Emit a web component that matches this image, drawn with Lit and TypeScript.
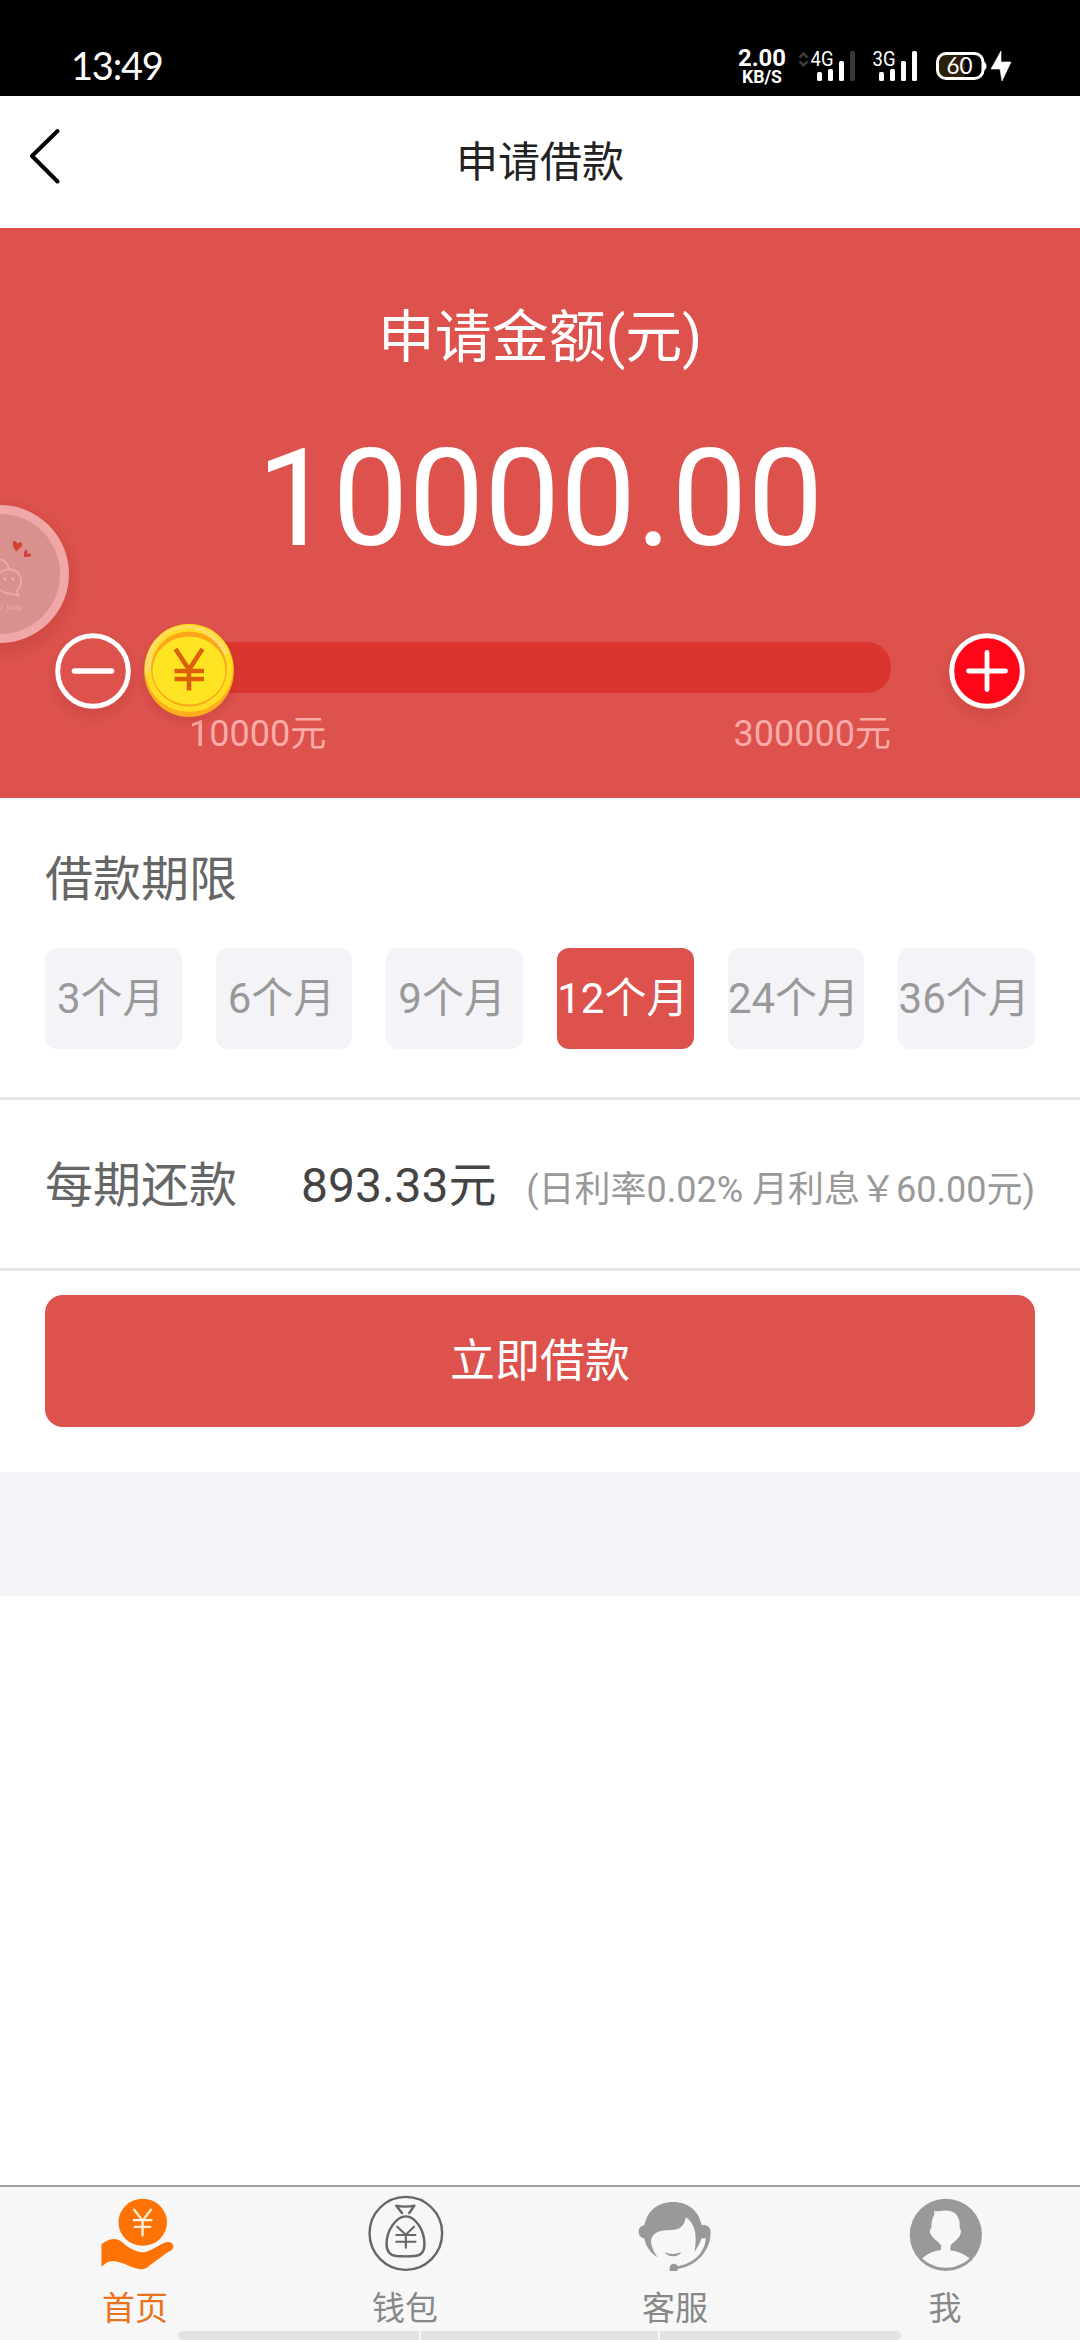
import { LitElement, html, css, svg } from "lit";
import { customElement, property, state } from "lit/decorators.js";
import { classMap } from "lit/directives/class-map.js";

@customElement("status-bar")
class StatusBar extends LitElement {
  static styles = css`
    :host {
      display: flex;
      justify-content: space-between;
      height: 96px;
      background: #000;
      color: #fff;
      box-sizing: border-box;
      padding: 36px 66px 0 71px;
    }
    .time {
      padding-top: 9px;
      font: 400 38px/40px Lato, Roboto, sans-serif;
      letter-spacing: -1.2px;
    }
    .icons {
      display: block;
      width: 280px;
      height: 60px;
    }
    .bold {
      font: 700 24px Roboto, sans-serif;
      fill: #fff;
    }
    .unit {
      font: 700 18px Roboto, sans-serif;
      fill: #fff;
    }
    .net {
      font: 400 20.5px Roboto, sans-serif;
      fill: #fff;
    }
    .level {
      font: 400 23px Lato, Roboto, sans-serif;
      fill: #fff;
    }
  `;

  render() {
    return html`
      <div class="time">13:49</div>
      <svg class="icons" viewBox="734 36 280 60">
        <text class="bold" x="738" y="66" textLength="48" lengthAdjust="spacingAndGlyphs">2.00</text>
        <text class="unit" x="742" y="83" textLength="40" lengthAdjust="spacingAndGlyphs">KB/S</text>
        <path d="M799.5 57.5l4-4 4 4M799.5 61.5l4 4 4-4" fill="none" stroke="#3a3a3a" stroke-width="2.6" />
        <text class="net" x="810.5" y="66" textLength="23" lengthAdjust="spacingAndGlyphs">4G</text>
        <g fill="#fff">
          <rect x="817" y="72" width="5" height="9" rx="1.5" />
          <rect x="828" y="69" width="5" height="12" rx="1.5" />
          <rect x="839" y="61" width="5" height="20" rx="1.5" />
          <rect x="850" y="51" width="5" height="30" rx="1.5" fill="#383838" />
          <rect x="879" y="72" width="5" height="9" rx="1.5" />
          <rect x="890" y="69" width="5" height="12" rx="1.5" />
          <rect x="901" y="61" width="5" height="20" rx="1.5" />
          <rect x="912" y="51" width="5" height="30" rx="1.5" />
        </g>
        <text class="net" x="872.5" y="66" textLength="23" lengthAdjust="spacingAndGlyphs">3G</text>
        <path d="M965 54h-19a8 8 0 0 0-8 8v8a8 8 0 0 0 8 8h19z" fill="#2b200b" />
        <rect x="937.5" y="53.5" width="45.5" height="25" rx="8.5" fill="none" stroke="#fff" stroke-width="3" />
        <path d="M983 61q3.5 1.500 3.500 5t-3.500 5z" fill="#fff" />
        <text class="level" x="946.500" y="74" textLength="26" lengthAdjust="spacingAndGlyphs">60</text>
        <path d="M1001 51l-10 18h9l2 12 9-19h-10z" fill="#fff" stroke="#fff" stroke-width="0.6" stroke-linejoin="round" />
      </svg>
    `;
  }
}

@customElement("amount-panel")
class AmountPanel extends LitElement {
  @property() amount = "10000.00";

  static styles = css`
    :host {
      display: flex;
      flex-direction: column;
      position: relative;
      height: 570px;
      background: #dd524d;
      color: #fff;
      box-sizing: border-box;
      padding-top: 71.500px;
    }
    .caption {
      height: 76px;
      font-size: 57px;
      line-height: 76px;
      text-align: center;
    }
    .amount {
      height: 160px;
      margin-top: 43.500px;
      font-size: 135px;
      line-height: 160px;
      text-align: center;
    }
    .slider {
      display: grid;
      grid-template-columns: 132px 702px 132px;
      grid-template-rows: 93px;
      padding-left: 57px;
      height: 93px;
      margin-top: 45px;
      align-items: center;
    }
    .round {
      display: block;
      width: 96px;
      height: 96px;
      overflow: visible;
    }
    .minus {
      margin-left: -12px;
    }
    .plus {
      margin-left: 48px;
    }
    .track {
      position: relative;
      height: 51px;
      margin-top: -6px;
      border-radius: 24px;
      background: #da362f;
    }
    .coin {
      position: absolute;
      left: -57px;
      top: -30px;
      width: 114px;
      height: 120px;
    }
    .limits {
      display: flex;
      justify-content: space-between;
      padding: 0 189px;
      margin-top: -7px;
      font-size: 36px;
      line-height: 48px;
      height: 48px;
      color: #fbaba8;
    }
    .bubble {
      position: absolute;
      left: 0;
      top: 257px;
      width: 100px;
      height: 180px;
    }
    .note {
      font: italic 400 11px "Liberation Serif", serif;
      fill: #ecadaa;
    }
  `;

  render() {
    return html`
      <div class="caption">申请金额(元)</div>
      <div class="amount">${this.amount}</div>
      <div class="slider">
        <svg class="round minus" viewBox="45 622.500 96 96">
          <defs>
            <radialGradient id="s"><stop offset="0.7" stop-color="#a83028" stop-opacity="0.18" /><stop offset="1" stop-color="#a83028" stop-opacity="0" /></radialGradient>
          </defs>
          <circle cx="93" cy="677" r="49" fill="url(#s)" />
          <circle cx="93" cy="670.5" r="35.3" fill="#dd524d" stroke="#fff" stroke-width="5" />
          <path d="M74.500 670.500h37" stroke="#fff" stroke-width="5.600" stroke-linecap="round" />
        </svg>
        <div class="track">
          <svg class="coin" viewBox="132 612 114 120">
            <defs>
              <radialGradient id="c"><stop offset="0.75" stop-color="#a83028" stop-opacity="0.25" /><stop offset="1" stop-color="#a83028" stop-opacity="0" /></radialGradient>
            </defs>
            <circle cx="189" cy="675" r="54" fill="url(#c)" />
            <ellipse cx="189" cy="670.500" rx="45" ry="46.500" fill="#fcae1c" />
            <ellipse cx="189" cy="668" rx="44" ry="44" fill="#ffde22" />
            <path d="M146 678A43 43 0 0 1 228 653L222 656A36 36 0 0 0 151 666z" fill="#fedc6c" />
            <ellipse cx="189" cy="669" rx="38" ry="37.500" fill="#fba61b" />
            <ellipse cx="189" cy="670.500" rx="36.500" ry="34" fill="#ffe423" />
            <path d="M175.500 649l13.500 20.500 13.500-20.500M174.500 671h29.500M174.500 679h29.500M189 668.500v22" fill="none" stroke="#db6007" stroke-width="4.600" />
          </svg>
        </div>
        <svg class="round plus" viewBox="939 622.500 96 96">
          <defs>
            <radialGradient id="p"><stop offset="0.7" stop-color="#a83028" stop-opacity="0.18" /><stop offset="1" stop-color="#a83028" stop-opacity="0" /></radialGradient>
          </defs>
          <circle cx="987" cy="677" r="49" fill="url(#p)" />
          <circle cx="987" cy="670.500" r="35.300" fill="#fe0618" stroke="#fff" stroke-width="5" />
          <path d="M968.500 670.500h37M987 652v37" stroke="#fff" stroke-width="4.800" stroke-linecap="round" />
        </svg>
      </div>
      <div class="limits"><span>10000元</span><span>300000元</span></div>
      <svg class="bubble" viewBox="0 485 100 180">
        <defs>
          <radialGradient id="b"><stop offset="0.8" stop-color="#a83028" stop-opacity="0.22" /><stop offset="1" stop-color="#a83028" stop-opacity="0" /></radialGradient>
        </defs>
        <circle cx="0" cy="580" r="84" fill="url(#b)" />
        <circle cx="0" cy="574" r="69" fill="#efa8a7" />
        <circle cx="0" cy="574" r="60" fill="#d8918d" />
        <path d="M16.500 551.500C12 547 12 541 14.500 541c2 0 2.500 2 2.800 3 .8-2 4.700-3 4.900.5.1 2.500-2.700 3.500-5.700 7z" fill="#d53f35" />
        <path d="M24 557c-.5-4 1-8 2.500-7 1.300.8.800 2.500.5 4 1.500-.8 4.300-.5 4 1.300-.2 1.900-4 1.700-7 1.700z" fill="#d53f35" />
        <g fill="none" stroke="#ecadaa" stroke-width="1.800">
          <path d="M0 559c5 1.500 8 5 9 10" />
          <path d="M0 573c3-3 7-4 11-3.500 7 1 11 7 10 14-.5 3-2 5-4 7 0 2 .5 3 1.500 4.500-3 .5-5-.5-7-1.500-4 .5-8-.5-11-4" />
        </g>
        <circle cx="5" cy="579" r="1.700" fill="#ecadaa" />
        <circle cx="13" cy="579" r="1.700" fill="#ecadaa" />
        <text class="note" x="22" y="609.500" text-anchor="end">u you</text>
      </svg>
    `;
  }
}

@customElement("term-picker")
class TermPicker extends LitElement {
  @state() private selected = 12;
  private terms = [3, 6, 9, 12, 24, 36];

  static styles = css`
    :host {
      display: block;
      height: 302px;
      box-sizing: border-box;
      padding: 50px 45px 0;
      border-bottom: 3px solid #e5e5e5;
    }
    .label {
      height: 64px;
      line-height: 64px;
      font-size: 48px;
      color: #666;
    }
    .terms {
      display: flex;
      justify-content: space-between;
      margin-top: 36px;
    }
    .term {
      width: 136.500px;
      height: 101px;
      box-sizing: border-box;
      padding: 1px 5px 0 0;
      border: 0;
      border-radius: 12px;
      background: #f4f3f8;
      color: #999;
      font: inherit;
      font-size: 42px;
      line-height: 100px;
      text-align: center;
      white-space: nowrap;
    }
    .active {
      background: #dd524d;
      color: #fff;
    }
  `;

  render() {
    return html`
      <div class="label">借款期限</div>
      <div class="terms">
        ${this.terms.map(
          (t) => html`<button
            class=${classMap({ term: true, active: t === this.selected })}
            @click=${() => (this.selected = t)}
          >${t}个月</button>`
        )}
      </div>
    `;
  }
}

const yenHand = svg`
  <circle cx="413" cy="157" r="70.500" fill="#ff7304" />
  <path d="M388 119l24.500 33 24.500-33M387 150.500h51M390 170.500h45M412.500 150v46" fill="none" stroke="#fff0e0" stroke-width="7" stroke-linecap="round" />
  <path d="M293 223C305 214 314 208 328 207C350 208 352 218 370 230C385 240 400 247 415 247C434 245 455 227 476 218C487 213 502 216 502 230C501 240 494 242 482 249L434 286C424 296 414 300 402 297C378 293 350 274 328 273C312 273 303 282 293 290z" fill="#ff7304" />`;

const moneyBag = svg`
  <g fill="none" stroke="#666" stroke-width="7" stroke-linejoin="round" stroke-linecap="round">
    <ellipse cx="1177" cy="190" rx="105.500" ry="109.500" />
    <path d="M1166 129L1149 107Q1176 113 1202 107L1187 129" />
    <path d="M1177 139C1204 139 1231 180 1231 222C1231 246 1222 257 1203 258Q1177 260 1149 258C1130 256 1121 244 1121 222C1121 180 1150 139 1177 139z" />
    <path d="M1152 170l24.500 24 24.500-24M1149 195h56M1149 215h56M1177 194v39" stroke-width="6" />
  </g>`;

const headset = svg`
  <path d="M340 262C319 250 306 229 301 205C290 202 285 196 285 185C285 174 291 168 302 165C310 122 341 96 385 96C428 96 460 122 468 165C485 164 494 172 494 186C495 240 455 288 398 297L398 303H375Q373 281 387 281Q396 281 399 289C446 280 478 247 480 205H468Q462 224 447 246C455 205 452 162 422 142Q416 182 376 180C340 181 324 190 321 212Q321 235 340 262z" fill="#999" />
  <path d="M360 247Q384 257 410 246Q399 260 384 259Q368 259 360 247z" fill="#999" />`;

const person = svg`
  <ellipse cx="1177" cy="194.500" rx="105" ry="108.500" fill="#999" />
  <path d="M1142 122Q1148 126 1166 122C1195 118 1214 130 1217 158L1217 175Q1222 178 1221 187C1218 205 1202 214 1191 226L1190 241Q1220 244 1246 265C1207 303 1147 303 1108 265Q1132 243 1163 240L1163 226C1154 212 1139 207 1131 188Q1129 178 1135 173Q1134 150 1144 133z" fill="#f7f7f7" />`;

@customElement("tab-bar")
class TabBar extends LitElement {
  static styles = css`
    :host {
      display: grid;
      grid-template-columns: repeat(4, 1fr);
      position: relative;
      height: 155px;
      background: #f7f7f7;
      border-top: 2px solid #a0a0a0;
      box-sizing: border-box;
    }
    .tab {
      display: flex;
      flex-direction: column;
      align-items: center;
      padding-top: 9px;
      color: #888;
      font-size: 33px;
    }
    .current {
      color: #e9731c;
    }
    .icon {
      display: block;
      width: 75px;
      height: 75px;
      overflow: visible;
    }
    .name {
      height: 44px;
      line-height: 44px;
      margin-top: 16px;
    }
    .gesture {
      position: absolute;
      left: 178px;
      bottom: 0;
      display: grid;
      grid-template-columns: 241px 237px 241px;
      column-gap: 2px;
      height: 9px;
    }
    .part {
      background: #e3e3e3;
    }
    .first {
      border-radius: 5px 0 0 5px;
    }
    .last {
      border-radius: 0 5px 5px 0;
    }
  `;

  private tabs = [
    { name: "首页", box: "283 78 218 225", art: yenHand },
    { name: "钱包", box: "1067 78 218 225", art: moneyBag },
    { name: "客服", box: "283 78 218 225", art: headset },
    { name: "我", box: "1067 78 218 225", art: person },
  ];

  render() {
    return html`
      ${this.tabs.map(
        (t, i) => html`<div class=${classMap({ tab: true, current: i === 0 })}>
          <svg class="icon" viewBox=${t.box} preserveAspectRatio="none">${t.art}</svg>
          <div class="name">${t.name}</div>
        </div>`
      )}
      <div class="gesture">
        <div class="part first"></div>
        <div class="part"></div>
        <div class="part last"></div>
      </div>
    `;
  }
}

@customElement("app-root")
class AppRoot extends LitElement {
  static styles = css`
    :host {
      display: flex;
      flex-direction: column;
      width: 1080px;
      height: 2340px;
      overflow: hidden;
      background: #fff;
      font-family: Roboto, "Noto Sans CJK SC", sans-serif;
    }
    .header {
      display: grid;
      grid-template-columns: 100px 1fr 100px;
      height: 132px;
      color: #222;
    }
    .back {
      display: block;
      width: 34px;
      height: 60px;
      margin: 30px 0 0 28px;
    }
    .title {
      padding-top: 2px;
      font-size: 42px;
      line-height: 130px;
      height: 130px;
      text-align: center;
    }
    .repay {
      display: flex;
      align-items: baseline;
      height: 171px;
      box-sizing: border-box;
      padding: 2px 45px 0;
      border-bottom: 3px solid #e5e5e5;
      line-height: 168px;
      white-space: nowrap;
    }
    .label {
      font-size: 48px;
      color: #666;
      width: 256px;
    }
    .value {
      font-size: 48px;
      color: #444;
      flex: 1;
    }
    .rate {
      font-size: 36px;
      color: #999;
    }
    .action {
      padding: 24px 45px 45px;
    }
    .submit {
      display: block;
      width: 100%;
      height: 132px;
      box-sizing: border-box;
      padding: 2px 0 0;
      border: 0;
      border-radius: 18px;
      background: #dd524d;
      color: #fff;
      font: inherit;
      font-size: 45px;
      line-height: 130px;
    }
    .band {
      height: 124px;
      background: #f4f3f8;
    }
    .rest {
      flex: 1;
    }
  `;

  render() {
    return html`
      <status-bar></status-bar>
      <div class="header">
        <svg class="back" viewBox="28 126 34 60">
          <path d="M57.500 131L32 156l25.500 25.500" fill="none" stroke="#000" stroke-width="4" stroke-linecap="round" stroke-linejoin="round" />
        </svg>
        <div class="title">申请借款</div>
      </div>
      <amount-panel></amount-panel>
      <term-picker></term-picker>
      <div class="repay">
        <span class="label">每期还款</span>
        <span class="value">893.33元</span>
        <span class="rate">(日利率0.02% 月利息￥60.00元)</span>
      </div>
      <div class="action"><button class="submit">立即借款</button></div>
      <div class="band"></div>
      <div class="rest"></div>
      <tab-bar></tab-bar>
    `;
  }
}
